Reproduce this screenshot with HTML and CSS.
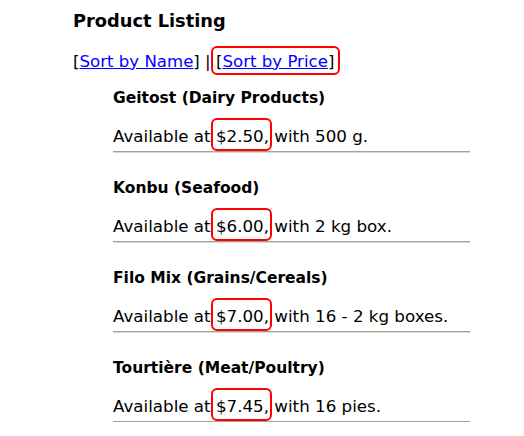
FILE: index.html
```html
<!DOCTYPE html>
<html lang="en">
<head>
    <meta charset="UTF-8">
    <title>Product Listing</title>
    <link rel="stylesheet" href="styles.css">
</head>
<body>
    <div class="page">
        <h2 class="title">Product Listing</h2>
        <p class="sorts">[<a href="#">Sort by Name</a>] | <span class="mark mark-link">[<a href="#">Sort by Price</a>]</span></p>
        <div class="items">
            <div class="item">
                <h3>Geitost (Dairy Products)</h3>
                <p>Available at <span class="mark">$2.50,</span> with 500 g.</p>
            </div>
            <div class="item">
                <h3>Konbu (Seafood)</h3>
                <p>Available at <span class="mark">$6.00,</span> with 2 kg box.</p>
            </div>
            <div class="item">
                <h3>Filo Mix (Grains/Cereals)</h3>
                <p>Available at <span class="mark">$7.00,</span> with 16 - 2 kg boxes.</p>
            </div>
            <div class="item">
                <h3>Tourtière (Meat/Poultry)</h3>
                <p>Available at <span class="mark">$7.45,</span> with 16 pies.</p>
            </div>
        </div>
    </div>
</body>
</html>
```

FILE: styles.css
```css
body {
    margin: 0;
    font-family: Verdana, "DejaVu Sans", sans-serif;
    color: #000;
    background: #fff;
}
.page { padding: 10px 0 0 73px; }
.title {
    margin: 0;
    font-size: 17.8px;
    line-height: 22px;
    font-weight: bold;
}
.sorts {
    margin: 19.5px 0 0;
    font-size: 16.6px;
    line-height: 20px;
}
.sorts a { color: #0000ff; }
.items { margin: -9.5px 0 0 40px; width: 357px; }
.item {
    padding: 27px 0 5.5px;
    border-bottom: 1px solid #a4a292;
    box-shadow: 0 1px 0 #dcdad0;
}
.item h3 {
    margin: 0;
    font-size: 15.5px;
    line-height: 18px;
    font-weight: bold;
}
.item p {
    margin: 18.5px 0 0;
    font-size: 16.7px;
    line-height: 20px;
}

/* red highlight around a piece of text */
.mark { position: relative; }
.mark::after {
    content: "";
    position: absolute;
    left: -5px;
    right: -3px;
    top: -8px;
    bottom: -5px;
    border: 2px solid #ff0000;
    border-radius: 6px;
}
.mark-link::after {
    left: -5px;
    right: -6px;
    top: -6px;
    bottom: -4px;
}
```
